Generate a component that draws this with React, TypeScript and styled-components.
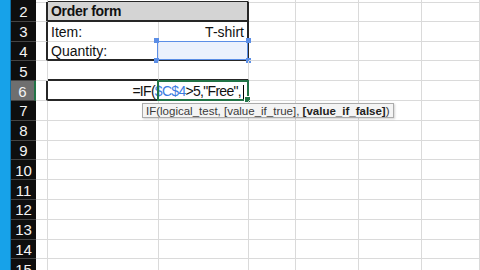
import React from "react";
import styled, { createGlobalStyle, css } from "styled-components";

const GlobalStyle = createGlobalStyle`
  html, body {
    margin: 0;
    padding: 0;
    background: #ffffff;
    overflow: hidden;
  }
  #root {
    width: 480px;
    height: 270px;
  }
`;

const GRID = "#dadada";
const DARK = "#262626";

const Page = styled.div`
  position: relative;
  display: flex;
  width: 480px;
  height: 270px;
  overflow: hidden;
  font-family: "Liberation Sans", Arial, sans-serif;
`;

const BlueStrip = styled.div`
  width: 11px;
  flex: none;
  background: #17a2e9;
  border-right: 1px solid #0f6fa3;
  box-sizing: border-box;
`;

const Sheet = styled.div`
  flex: 1;
  display: flex;
  flex-direction: column;
`;

const Row = styled.div<{ $h?: number }>`
  display: grid;
  grid-template-columns: 25px 12px 111px 90px 47px 63px 63px 1fr;
  height: ${(p) => p.$h ?? 19.8}px;
  flex: none;
`;

const RowHead = styled.div<{ $active?: boolean }>`
  box-sizing: border-box;
  display: flex;
  align-items: center;
  justify-content: center;
  background: ${(p) => (p.$active ? "#6f6f6f" : "#0e0e0e")};
  border-bottom: 1px solid #444;
  border-right: ${(p) => (p.$active ? "2px solid #217346" : "none")};
  color: #f4f4f4;
  font-size: 15px;
  padding-top: 1px;
`;

type Edge = "dark" | "grid" | "none";

const edge = (e?: Edge) =>
  e === "dark" ? `2px solid ${DARK}` : e === "none" ? "none" : `1px solid ${GRID}`;

const Cell = styled.div<{
  $right?: Edge;
  $bottom?: Edge;
  $span?: number;
  $align?: "left" | "right";
  $fill?: string;
  $bold?: boolean;
}>`
  position: relative;
  box-sizing: border-box;
  min-width: 0;
  display: flex;
  align-items: center;
  justify-content: ${(p) => (p.$align === "right" ? "flex-end" : "flex-start")};
  padding: 1px 3px 0 3px;
  white-space: nowrap;
  font-size: 14px;
  color: #111;
  background: ${(p) => p.$fill || "transparent"};
  font-weight: ${(p) => (p.$bold ? 700 : 400)};
  letter-spacing: ${(p) => (p.$bold ? "-0.3px" : "0")};
  ${(p) => (p.$span ? css`grid-column: span ${p.$span};` : "")}
  border-right: ${(p) => edge(p.$right)};
  border-bottom: ${(p) => edge(p.$bottom)};
`;

const Formula = styled.span`
  flex: none;
  letter-spacing: -0.7px;
  color: #111;
`;

const Ref = styled.span`
  color: #3b7be0;
`;

const Caret = styled.span`
  display: inline-block;
  width: 1px;
  height: 14px;
  background: #000;
  margin-left: 2px;
  vertical-align: -3px;
`;

const ActiveBox = styled.div`
  position: absolute;
  left: -2px;
  top: -1px;
  right: -2px;
  bottom: -2px;
  border: 2px solid #217346;
  pointer-events: none;
`;

const FillHandle = styled.span`
  position: absolute;
  right: -4px;
  bottom: -4px;
  width: 5px;
  height: 5px;
  background: #217346;
  border: 1px solid #fff;
`;

const Selection = styled.div`
  position: absolute;
  left: -2px;
  top: -1px;
  right: -1px;
  bottom: -1px;
  border: 1.5px solid #5b8ee6;
  background: rgba(222, 231, 251, 0.6);
  pointer-events: none;
`;

const Handle = styled.span<{ $x: "left" | "right"; $y: "top" | "bottom" }>`
  position: absolute;
  ${(p) => p.$x}: -4px;
  ${(p) => p.$y}: -4px;
  width: 5px;
  height: 5px;
  background: #5b8ee6;
`;

const Tooltip = styled.div`
  position: absolute;
  left: 142px;
  top: 103px;
  height: 15px;
  box-sizing: border-box;
  padding: 0 3px;
  display: flex;
  align-items: center;
  background: #f4f4f4;
  border: 1px solid #ababab;
  box-shadow: 1px 1px 2px rgba(0, 0, 0, 0.18);
  color: #3a3a3a;
  font-size: 11.5px;
  white-space: nowrap;
`;

const Arg = styled.b`
  font-weight: 700;
  color: #222;
`;

function Tail() {
  return (
    <>
      <Cell />
      <Cell />
      <Cell />
      <Cell />
    </>
  );
}

export default function App() {
  const rest = [7, 8, 9, 10, 11, 12, 13, 14, 15];
  return (
    <>
      <GlobalStyle />
      <Page>
        <BlueStrip />
        <Sheet>
          {/* bottom sliver of row 1 */}
          <Row $h={2}>
            <RowHead />
            <Cell />
            <Cell $bottom="dark" $right="none" />
            <Cell $bottom="dark" />
            <Tail />
          </Row>

          <Row>
            <RowHead>2</RowHead>
            <Cell $right="dark" />
            <Cell $span={2} $fill="#d4d4d4" $bold $right="dark" $bottom="dark">
              Order form
            </Cell>
            <Tail />
          </Row>

          <Row>
            <RowHead>3</RowHead>
            <Cell $right="dark" />
            <Cell>Item:</Cell>
            <Cell $align="right" $right="dark">
              T-shirt
            </Cell>
            <Tail />
          </Row>

          <Row>
            <RowHead>4</RowHead>
            <Cell $right="dark" />
            <Cell $bottom="dark">Quantity:</Cell>
            <Cell $right="dark" $bottom="dark">
              <Selection>
                <Handle $x="left" $y="top" />
                <Handle $x="right" $y="top" />
                <Handle $x="left" $y="bottom" />
                <Handle $x="right" $y="bottom" />
              </Selection>
            </Cell>
            <Tail />
          </Row>

          <Row>
            <RowHead>5</RowHead>
            <Cell />
            <Cell $bottom="dark" />
            <Cell $bottom="dark" />
            <Tail />
          </Row>

          <Row>
            <RowHead $active>6</RowHead>
            <Cell $right="dark" />
            <Cell $right="none" $bottom="dark" />
            <Cell $align="right" $right="dark" $bottom="dark">
              <Formula>
                =IF(<Ref>$C$4</Ref>&gt;5,"Free",
                <Caret />
              </Formula>
              <ActiveBox>
                <FillHandle />
              </ActiveBox>
            </Cell>
            <Tail />
          </Row>

          {rest.map((r) => (
            <Row key={r}>
              <RowHead>{r}</RowHead>
              <Cell />
              <Cell />
              <Cell />
              <Tail />
            </Row>
          ))}
        </Sheet>
        <Tooltip>
          IF(logical_test, [value_if_true],&nbsp;<Arg>[value_if_false]</Arg>)
        </Tooltip>
      </Page>
    </>
  );
}
